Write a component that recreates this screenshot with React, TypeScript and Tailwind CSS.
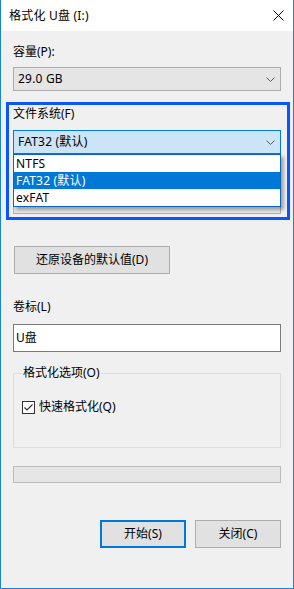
const font = { fontFamily: '"Noto Sans", "Noto Sans CJK SC", sans-serif' };

function Chevron() {
  return (
    <svg width="9" height="5" viewBox="0 0 9 5" className="shrink-0">
      <path d="M0.5 0.5 L4.5 4.5 L8.5 0.5" fill="none" stroke="#5a5a5a" strokeWidth="1" />
    </svg>
  );
}

function Combo({ value, focused }: { value?: string; focused?: boolean }) {
  return (
    <div
      className={`flex h-[24px] items-center justify-between border pl-[4px] pr-[5px] ${
        focused ? 'border-[#0078d7] bg-[#cce4f7]' : 'border-[#adadad] bg-[#e5e5e5]'
      }`}
    >
      <span className="leading-[16px] tracking-[0.2px]">{value}</span>
      <Chevron />
    </div>
  );
}

const options = ['NTFS', 'FAT32 (默认)', 'exFAT'];

export default function App() {
  return (
    <div
      className="flex h-[589px] w-[294px] flex-col border-x border-b border-[#1883d7] bg-[#f0f0f0] text-[12px] text-[#000]"
      style={font}
    >
      {/* Title bar */}
      <div className="flex h-[31px] items-center justify-between bg-white pl-[8px] pr-[9px]">
        <span className="leading-[16px] tracking-[0.2px]">格式化 U盘 (I:)</span>
        <svg width="11" height="11" viewBox="0 0 11 11">
          <path d="M0.5 0.5 L10.5 10.5 M10.5 0.5 L0.5 10.5" stroke="#000" strokeWidth="1" />
        </svg>
      </div>

      <div className="flex flex-col px-[12px]">
        <div className="mt-[13px] h-[16px] leading-[16px]">容量(P):</div>
        <div className="mt-[7px]">
          <Combo value="29.0 GB" />
        </div>

        {/* Highlighted file system area */}
        <div className="mt-[11px] -ml-[7px] -mr-[9px] border-[3px] border-[#0a55ff] pb-[3px] pl-[4px] pr-[6px]">
          <div className="mt-[1px] h-[16px] leading-[16px]">文件系统(F)</div>
          <div className="relative mt-[8px]">
            <Combo value="FAT32 (默认)" focused />
            <div className="absolute left-0 right-0 top-[24px] z-10 border border-[#0a64c0] bg-white shadow-[3px_3px_3px_rgba(0,0,0,0.3)]">
              {options.map((o) => (
                <div
                  key={o}
                  className={`h-[17px] pl-[2px] leading-[17px] tracking-[0.2px] ${
                    o.startsWith('FAT32') ? 'bg-[#0078d7] text-white' : ''
                  }`}
                >
                  {o}
                </div>
              ))}
            </div>
          </div>
          <div className="mt-[36px]">
            <Combo />
          </div>
        </div>

        <button className="ml-[1px] mt-[26px] h-[28px] w-[156px] border border-[#adadad] bg-[#e1e1e1] leading-[16px]">
          还原设备的默认值(D)
        </button>

        <div className="mt-[25px] h-[16px] leading-[16px]">卷标(L)</div>
        <div className="mt-[9px] flex h-[28px] items-center border border-[#7a7a7a] bg-white pl-[2px]">
          <span className="leading-[16px]">U盘</span>
        </div>

        {/* Format options group */}
        <div className="relative mt-[21px] h-[75px] border border-[#dcdcdc]">
          <span className="absolute left-[8px] top-[-9px] bg-[#f0f0f0] px-[1px] leading-[16px]">
            格式化选项(O)
          </span>
          <div className="ml-[8px] mt-[25px] flex items-center gap-[4px]">
            <svg width="13" height="13" viewBox="0 0 13 13">
              <rect x="0.5" y="0.5" width="12" height="12" fill="#fff" stroke="#333" />
              <path d="M2.5 6.5 L5 9 L10.5 3.5" fill="none" stroke="#333" strokeWidth="1.2" />
            </svg>
            <span className="leading-[16px]">快速格式化(Q)</span>
          </div>
        </div>

        <div className="mt-[18px] h-[17px] border border-[#bcbcbc] bg-[#e6e6e6]" />

        <div className="mt-[37px] flex justify-end gap-[9px]">
          <button className="h-[28px] w-[86px] border-2 border-[#0078d7] bg-[#e1e1e1] leading-[16px]">
            开始(S)
          </button>
          <button className="h-[28px] w-[86px] border border-[#adadad] bg-[#e1e1e1] leading-[16px]">
            关闭(C)
          </button>
        </div>
      </div>
    </div>
  );
}
